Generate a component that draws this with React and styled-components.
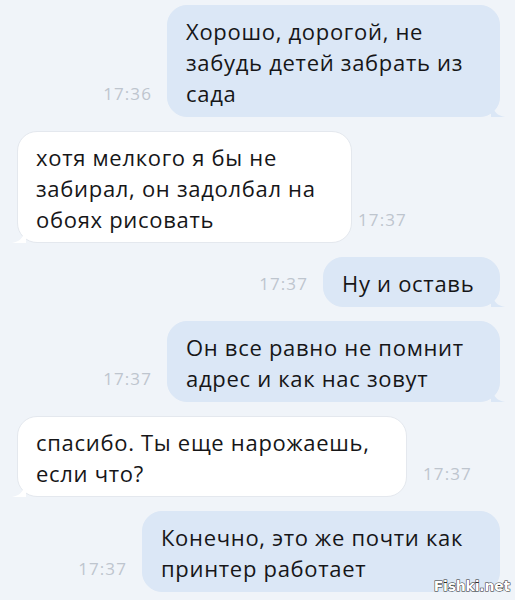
import styled, { createGlobalStyle } from "styled-components";

const GlobalStyle = createGlobalStyle`
  html, body {
    margin: 0;
    padding: 0;
    background: #f0f4f9;
  }
`;

const Page = styled.div`
  position: relative;
  width: 515px;
  height: 600px;
  box-sizing: border-box;
  padding: 5px 15px 0 17px;
  display: flex;
  flex-direction: column;
  gap: 14px;
  background: #f0f4f9;
  font-family: "Open Sans", "Liberation Sans", sans-serif;
  overflow: hidden;
`;

const Row = styled.div`
  display: flex;
  justify-content: ${(props) => (props.out ? "flex-end" : "flex-start")};
  align-items: flex-end;
  gap: ${(props) => props.gap || 15}px;
`;

const Time = styled.span`
  font-size: 17px;
  line-height: 19px;
  color: #bec5ce;
  margin-bottom: 14px;
  letter-spacing: 1.1px;
`;

const Bubble = styled.div`
  position: relative;
  box-sizing: border-box;
  width: ${(props) => props.width}px;
  padding: 10px 0 7px 18px;
  border-radius: 20px;
  font-size: 22px;
  line-height: 31px;
  letter-spacing: 0.7px;
  white-space: nowrap;
  color: #161618;
  background: ${(props) => (props.out ? "#dbe7f6" : "#ffffff")};
  border: 1px solid ${(props) => (props.out ? "#dbe7f6" : "#e4e8ee")};
`;

const Tail = styled.svg`
  position: absolute;
  bottom: -1px;
  ${(props) => (props.out ? "right: -6px;" : "left: -6px; transform: scaleX(-1);")}
  width: 14px;
  height: 16px;
`;

const Watermark = styled.div`
  position: absolute;
  right: 5px;
  bottom: 6px;
  font-family: "DejaVu Sans", sans-serif;
  font-weight: bold;
  font-size: 14px;
  letter-spacing: -0.2px;
  color: #ffffff;
  -webkit-text-stroke: 1px #2b2b2b;
  paint-order: stroke fill;
`;

const Message = ({ out, width, time, gap, children }) => {
  const bubble = (
    <Bubble out={out} width={width}>
      {children}
      <Tail out={out} viewBox="0 0 14 16">
        <path
          d="M0 0 C2 8 4 12 8 14 C10 15 12 15.5 14 16 L0 16 Z"
          fill={out ? "#dbe7f6" : "#ffffff"}
        />
      </Tail>
    </Bubble>
  );
  return (
    <Row out={out} gap={gap}>
      {out && <Time>{time}</Time>}
      {bubble}
      {!out && <Time>{time}</Time>}
    </Row>
  );
};

export default function App() {
  return (
    <>
      <GlobalStyle />
      <Page>
        <Message out time="17:36" width={333}>
          Хорошо, дорогой, не
          <br />
          забудь детей забрать из
          <br />
          сада
        </Message>
        <Message time="17:37" width={335} gap={6}>
          хотя мелкого я бы не
          <br />
          забирал, он задолбал на
          <br />
          обоях рисовать
        </Message>
        <Message out time="17:37" width={177}>
          Ну и оставь
        </Message>
        <Message out time="17:37" width={333}>
          Он все равно не помнит
          <br />
          адрес и как нас зовут
        </Message>
        <Message time="17:37" width={390} gap={16}>
          спасибо. Ты еще нарожаешь,
          <br />
          если что?
        </Message>
        <Message out time="17:37" width={358}>
          Конечно, это же почти как
          <br />
          принтер работает
        </Message>
        <Watermark>Fishki.net</Watermark>
      </Page>
    </>
  );
}
